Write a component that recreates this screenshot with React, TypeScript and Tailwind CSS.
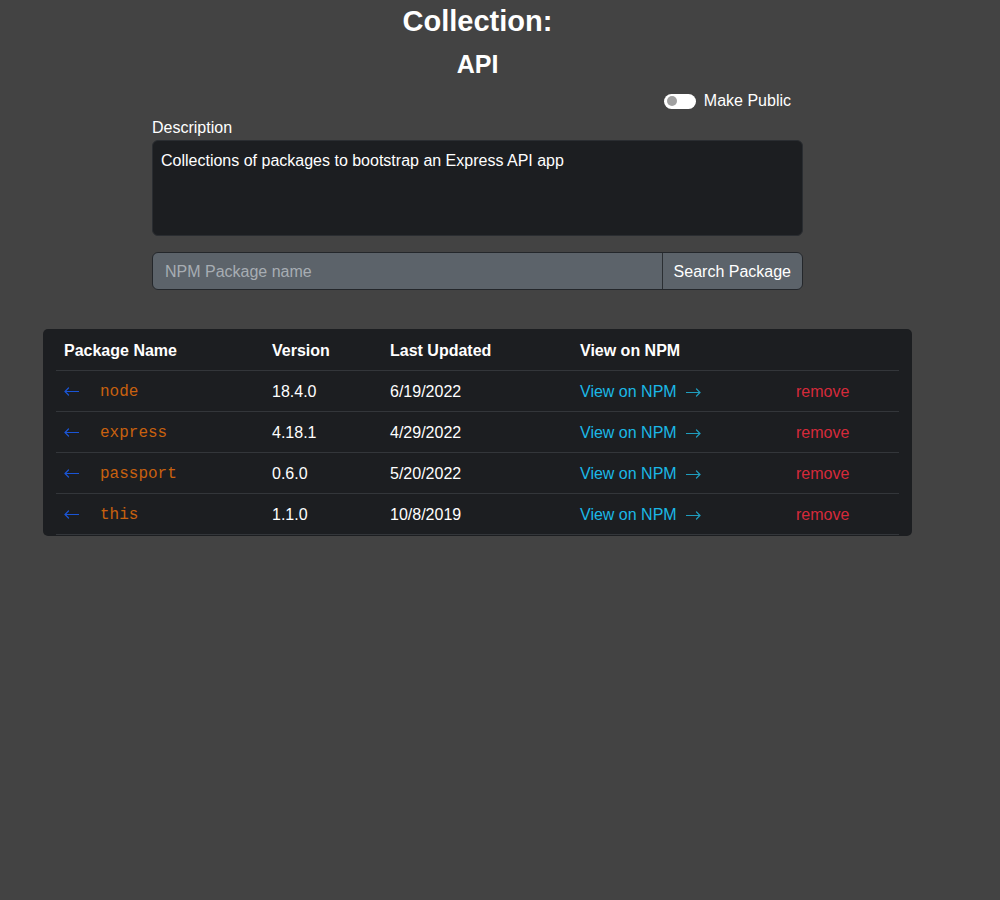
import React from "react";

const rows = [
  { name: "node", version: "18.4.0", updated: "6/19/2022" },
  { name: "express", version: "4.18.1", updated: "4/29/2022" },
  { name: "passport", version: "0.6.0", updated: "5/20/2022" },
  { name: "this", version: "1.1.0", updated: "10/8/2019" },
];

function ArrowLeft() {
  return (
    <svg width="15" height="9" viewBox="0 0 15 9" fill="none" stroke="#1a55d6" strokeWidth="1.2" strokeLinecap="round">
      <path d="M14.5 4.5H1M4.5 1L1 4.5L4.5 8" />
    </svg>
  );
}

function ArrowRight() {
  return (
    <svg width="15" height="9" viewBox="0 0 15 9" fill="none" stroke="#1f9dbe" strokeWidth="1.2" strokeLinecap="round">
      <path d="M0.5 4.5H14M10.5 1L14 4.5L10.5 8" />
    </svg>
  );
}

export default function App() {
  return (
    <div
      className="min-h-[900px] w-full bg-[#434343] text-white"
      style={{ fontFamily: "'Liberation Sans', Arial, sans-serif" }}
    >
      <div className="ml-[152px] w-[651px]">
        <h2 className="h-[42px] pt-[3px] text-center text-[29px] font-bold leading-[36px]">Collection:</h2>
        <h4 className="h-[44px] text-center text-[25px] font-bold leading-[44px]">API</h4>
        <div className="flex h-[30px] items-center justify-end pr-[12px]">
          <div className="mr-[8px] flex h-[15px] w-[32px] items-center rounded-full bg-white px-[3px]">
            <div className="h-[10px] w-[10px] rounded-full bg-[#a0a0a0]" />
          </div>
          <span className="text-[16px] leading-[20px]">Make Public</span>
        </div>
        <div className="pt-[1px] text-[16px] leading-[22px]">Description</div>
        <div className="mt-[1px] h-[96px] rounded-[6px] border border-[#2a2d31] bg-[#1c1e21] px-[8px] py-[8px] text-[16px] leading-[24px]">
          Collections of packages to bootstrap an Express API app
        </div>
        <div className="mt-[16px] flex h-[38px] rounded-[6px] border border-[#24272b] bg-[#5c636a]">
          <div className="flex flex-1 items-center px-[12px] pt-[1px] text-[16px] text-[#a7adb3]">NPM Package name</div>
          <div className="flex items-center border-l border-[#2b2f33] px-[11px] pt-[1px] text-[16px]">Search Package</div>
        </div>
      </div>

      <div className="ml-[43px] mt-[39px] w-[869px] rounded-[5px] bg-[#1c1e21] px-[13px] pb-[1px]">
        <div className="grid h-[42px] grid-cols-[208px_118px_190px_216px_111px] items-center border-b border-[#33363a] pt-[2px] text-[16px] font-bold">
          <div className="pl-[8px]">Package Name</div>
          <div className="pl-[8px]">Version</div>
          <div className="pl-[8px]">Last Updated</div>
          <div className="pl-[8px]">View on NPM</div>
          <div />
        </div>
        {rows.map((r) => (
          <div
            key={r.name}
            className="grid h-[41px] grid-cols-[208px_118px_190px_216px_111px] items-center border-b border-[#33363a] pt-[2px] text-[16px]"
          >
            <div className="flex items-center pl-[8px]">
              <span className="flex w-[36px] items-center pb-[2px]">
                <ArrowLeft />
              </span>
              <span
                className="text-[16px] text-[#c8610f]"
                style={{ fontFamily: "'Liberation Mono', 'Courier New', monospace" }}
              >
                {r.name}
              </span>
            </div>
            <div className="pl-[8px]">{r.version}</div>
            <div className="pl-[8px]">{r.updated}</div>
            <div className="flex items-center pl-[8px] text-[#1bb8e6]">
              <span>View on NPM</span>
              <span className="ml-[9px] flex items-center">
                <ArrowRight />
              </span>
            </div>
            <div className="pl-[8px] text-[#d52a3b]">remove</div>
          </div>
        ))}
      </div>
    </div>
  );
}
